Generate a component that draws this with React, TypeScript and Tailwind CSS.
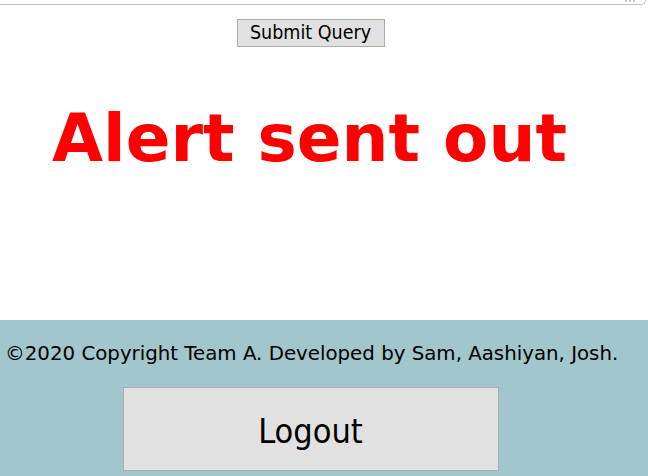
export default function App() {
  return (
    <div className="flex flex-col h-[476px] w-[648px] overflow-hidden bg-white font-['DejaVu_Sans',sans-serif] text-black">
      {/* scrolled textarea edge */}
      <div className="relative h-[5px] shrink-0 mr-[2px] border-b border-r border-[#c4c4c4] rounded-br-[6px]">
        <svg className="absolute right-[8px] top-0" width="12" height="3" viewBox="0 0 12 3">
          <rect x="0" y="0" width="2" height="2" fill="#c8c8c8" />
          <rect x="4" y="0" width="2" height="2" fill="#c8c8c8" />
          <rect x="8" y="0" width="2" height="2" fill="#c8c8c8" />
        </svg>
      </div>
      <div className="h-[315px] shrink-0 w-[621px] flex flex-col items-center">
        <button className="mt-[14px] h-[28px] w-[148px] bg-[#e1e1e1] border border-[#adadad] text-[19.5px] leading-none font-['DejaVu_Sans_Condensed',sans-serif]">
          Submit Query
        </button>
        <h1 className="mt-[59px] w-full pl-[52px] text-[66px] leading-none font-bold text-[#ff0000]">
          Alert sent out
        </h1>
      </div>
      <footer className="flex-1 bg-[#a1c6cb]">
        <div className="w-[621px] flex flex-col items-center">
          <p className="mt-[21px] self-start pl-[5px] text-[19.8px] leading-[26px] whitespace-nowrap">
            ©2020 Copyright Team A. Developed by Sam, Aashiyan, Josh.
          </p>
          <button className="mt-[20px] h-[84px] w-[376px] bg-[#e1e1e1] border border-[#adadad] text-[34px] pt-[4px] font-['DejaVu_Sans_Condensed',sans-serif]">
            Logout
          </button>
        </div>
      </footer>
    </div>
  );
}
